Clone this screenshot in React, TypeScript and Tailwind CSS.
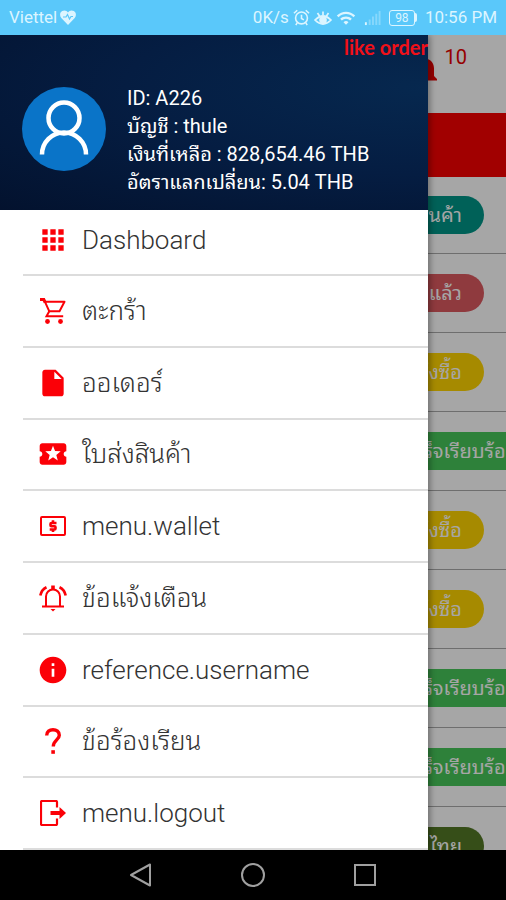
import type { ReactNode } from 'react'
import { MdApps, MdInfo, MdInsertDriveFile, MdLocalActivity, MdNotifications, MdWifi } from 'react-icons/md'

type MenuItem = { label: string; icon: ReactNode }
type Order = { status: string; tone: string }

function CartIcon() {
  return (
    <svg viewBox="0 0 26 26" className="size-[26px]" fill="none" stroke="currentColor">
      <path d="M0 1.500h3.800l1.400 3" strokeWidth="3" />
      <path d="M5 3.800h19.500l-5 9.500H9.300L5 3.800Z" strokeWidth="2" strokeLinejoin="round" />
      <path d="M9.300 13.300 6.500 18.300h16.700" strokeWidth="2" />
      <circle cx="7.500" cy="23.500" r="2.400" fill="currentColor" stroke="none" />
      <circle cx="20.500" cy="23.500" r="2.400" fill="currentColor" stroke="none" />
    </svg>
  )
}

function WalletIcon() {
  return (
    <svg viewBox="0 0 26 20" className="h-5 w-[26px]" fill="none" stroke="currentColor">
      <rect x="1" y="1" width="24" height="18" rx="1" strokeWidth="2" />
      <path d="M16.500 7h-5a1 1 0 0 0-1 1v1.200a1 1 0 0 0 1 1h3a1 1 0 0 1 1 1V12.500a1 1 0 0 1-1 1H9.700" strokeWidth="2.600" />
      <path d="M13 4.300v2M13 14v2" strokeWidth="2.600" />
    </svg>
  )
}

function BellIcon() {
  return (
    <svg viewBox="0 0 28 28" className="size-7" fill="none" stroke="currentColor" strokeWidth="2">
      <path d="M7 22v-9.500a7 7 0 0 1 14 0V22M3 22.500h22" />
      <path d="M14 1.500v4" strokeWidth="3.600" />
      <path d="M7.500 3.200Q2.600 5.500 1.300 11.500M20.500 3.200Q25.400 5.500 26.700 11.500" strokeWidth="2.600" />
      <path d="M11.500 25h5L14 27.500Z" fill="currentColor" stroke="none" />
    </svg>
  )
}

function QuestionIcon() {
  return (
    <svg viewBox="0 0 16 26" className="h-[26px] w-4" fill="none" stroke="currentColor" strokeWidth="3.400">
      <path d="M1.700 7.500C1.700 3.500 4.500 1.700 8 1.700s6.300 2.100 6.300 5.500c0 4.600-6 5-6 11.300" />
      <path d="M6.300 22.200h3.600v3.600H6.300z" fill="currentColor" stroke="none" />
    </svg>
  )
}

function LogoutIcon() {
  return (
    <svg viewBox="0 0 26 26" className="size-[26px]" fill="none" stroke="currentColor" strokeWidth="2.200">
      <path d="M17 7.500V2a1 1 0 0 0-1-1H2a1 1 0 0 0-1 1v22a1 1 0 0 0 1 1h14a1 1 0 0 0 1-1v-5.500" />
      <path d="M10.500 13h11" strokeWidth="4" />
      <path d="M19.500 7 26 13l-6.500 6Z" fill="currentColor" stroke="none" />
    </svg>
  )
}

const menu: MenuItem[] = [
  { label: 'Dashboard', icon: <MdApps className="size-8" /> },
  { label: 'ตะกร้า', icon: <CartIcon /> },
  { label: 'ออเดอร์', icon: <MdInsertDriveFile className="size-8" /> },
  { label: 'ใบส่งสินค้า', icon: <MdLocalActivity className="size-8" /> },
  { label: 'menu.wallet', icon: <WalletIcon /> },
  { label: 'ข้อแจ้งเตือน', icon: <BellIcon /> },
  { label: 'reference.username', icon: <MdInfo className="size-8" /> },
  { label: 'ข้อร้องเรียน', icon: <QuestionIcon /> },
  { label: 'menu.logout', icon: <LogoutIcon /> },
]

const pill = 'mr-[22px] rounded-full px-[22px]'
const wide = '-mr-5 px-2'

const orders: Order[] = [
  { status: 'สินค้า', tone: `${pill} bg-[#009688]` },
  { status: 'สั่งแล้ว', tone: `${pill} bg-[#dc5960]` },
  { status: 'สั่งซื้อ', tone: `${pill} bg-[#ffd500]` },
  { status: 'เสร็จเรียบร้อย', tone: `${wide} bg-[#48c75a]` },
  { status: 'สั่งซื้อ', tone: `${pill} bg-[#ffd500]` },
  { status: 'สั่งซื้อ', tone: `${pill} bg-[#ffd500]` },
  { status: 'เสร็จเรียบร้อย', tone: `${wide} bg-[#48c75a]` },
  { status: 'เสร็จเรียบร้อย', tone: `${wide} bg-[#48c75a]` },
  { status: 'ไทย', tone: `${pill} bg-[#537826]` },
]

function StatusBar() {
  return (
    <div className="flex h-[35px] shrink-0 items-center bg-[#5ac8fa] px-[9px] text-[17px] text-[#dcf5ff]">
      <span>Viettel</span>
      <svg viewBox="0 0 16 15" className="ml-[3px] h-[15px] w-4">
        <path
          d="M8 15 1.300 8C-.6 5.700-.2 2.300 2.200 1 4.300-.2 6.800.4 8 2.500 9.200.4 11.700-.2 13.800 1c2.400 1.300 2.800 4.700.9 7L8 15Z"
          fill="currentColor"
        />
        <path d="M3 7h3l1.500-2.500 2 4.500L11 6.500h2" fill="none" stroke="#5ac8fa" strokeWidth="1.200" />
      </svg>
      <span className="ml-auto">0K/s</span>
      <svg viewBox="0 0 18 18" className="ml-1 size-[17px]" fill="none" stroke="currentColor" strokeWidth="1.700">
        <circle cx="9" cy="9.500" r="6.300" />
        <path d="M9 6v4l2.500 1.500M1 4.500 4.500 1.300M17 4.500l-3.500-3.200M4.500 14.500 3 17M13.500 14.500 15 17" />
      </svg>
      <svg viewBox="0 0 18 18" className="ml-1 size-[18px]" fill="none" stroke="currentColor" strokeWidth="1.700">
        <path d="M1 11q8-8 16 0-8 8-16 0ZM9 2.500V6M3.500 4l2 3M14.500 4l-2 3" />
        <circle cx="9" cy="11" r="3" fill="currentColor" />
      </svg>
      <MdWifi className="ml-1 size-5" />
      <svg viewBox="0 0 18 18" className="ml-2 size-[17px]" fill="currentColor">
        <path d="M1 14h2v3H1z" />
        <path d="M5 11h2v6H5zM8.500 8h2v9h-2zM12 5h2v12h-2zM15.500 2h2v15h-2z" opacity=".35" />
      </svg>
      <span className="ml-2 flex h-4 w-[26px] items-center justify-center rounded-[3px] border border-current text-[12px]">
        98
      </span>
      <span className="h-[9px] w-[2px] rounded-r bg-current" />
      <span className="ml-2">10:56 PM</span>
    </div>
  )
}

function OrdersPage() {
  return (
    <main className="flex h-full flex-col bg-white">
      <header className="flex h-[78px] shrink-0 justify-end pt-[17px] pr-[39px] text-[#e60000]">
        <MdNotifications className="size-9" />
        <span className="ml-[2px] text-xl leading-[10px]">10</span>
      </header>
      <div className="h-16 shrink-0 bg-[#f80000]" />
      <ul>
        {orders.map((order, index) => (
          <li
            key={index}
            className="flex h-[79px] items-center justify-end border-b border-[#aaa] first:h-[77px]"
          >
            <span className={`flex h-[38px] items-center text-[20px] whitespace-nowrap text-white ${order.tone}`}>
              {order.status}
            </span>
          </li>
        ))}
      </ul>
    </main>
  )
}

function Profile() {
  return (
    <header className="relative flex h-[175px] shrink-0 items-start bg-[radial-gradient(ellipse_at_100%_30%,#06284f_0%,#051d42_50%,#03122e_100%)] pt-[49px] pl-[22px] text-white">
      <p className="absolute top-0 right-0 font-[Lato] text-xl leading-6 font-bold text-[#f01018]">like order</p>
      <svg viewBox="0 0 84 84" className="mt-[3px] size-[84px] shrink-0" fill="none" stroke="#fff" strokeWidth="4.500">
        <circle cx="42" cy="42" r="42" fill="#0a74c8" stroke="none" />
        <circle cx="42" cy="31" r="15.500" />
        <path d="M20 67.500a22 22 0 0 1 44 0" />
      </svg>
      <div className="ml-[21px] text-xl leading-7 whitespace-nowrap">
        <p>ID: A226</p>
        <p>บัญชี : thule</p>
        <p>เงินที่เหลือ : 828,654.46 THB</p>
        <p>อัตราแลกเปลี่ยน: 5.04 THB</p>
      </div>
    </header>
  )
}

function Drawer() {
  return (
    <aside className="absolute inset-y-0 left-0 flex w-[calc(100%-78px)] flex-col bg-white shadow-[2px_0_6px_rgba(0,0,0,0.35)]">
      <Profile />
      <nav className="flex flex-1 flex-col pl-[23px]">
        {menu.map((item) => (
          <a
            key={item.label}
            href="#"
            className="flex flex-1 items-center border-b-2 border-[#dcdcdc] text-[#333] first:h-[66px] first:flex-none first:pb-1"
          >
            <span className="flex w-[59px] justify-center text-[#fb0007]">{item.icon}</span>
            <span className="text-[26px] leading-8 font-light">{item.label}</span>
          </a>
        ))}
      </nav>
    </aside>
  )
}

function SystemNav() {
  const icon = 'size-6 fill-none stroke-[#a0a0a0] stroke-2'
  return (
    <div className="flex h-[50px] shrink-0 items-center justify-center gap-[88px] bg-black">
      <button aria-label="Back">
        <svg viewBox="0 0 24 24" className={icon}>
          <path d="M21 1.500v21L2 12Z" strokeLinejoin="round" />
        </svg>
      </button>
      <button aria-label="Home">
        <svg viewBox="0 0 24 24" className={icon}>
          <circle cx="12" cy="12" r="11" />
        </svg>
      </button>
      <button aria-label="Recent apps">
        <svg viewBox="0 0 24 24" className={icon}>
          <path d="M2 2h20v20H2z" />
        </svg>
      </button>
    </div>
  )
}

export default function App() {
  return (
    <div className="flex h-screen flex-col overflow-hidden font-[Roboto,'Noto_Sans_Thai_Looped','Noto_Looped_Thai','Droid_Sans_Thai',Waree,Loma,Garuda,'Noto_Sans',sans-serif]">
      <StatusBar />
      <div className="relative min-h-0 flex-1 overflow-hidden">
        <OrdersPage />
        <div className="absolute inset-0 bg-black/35" />
        <Drawer />
      </div>
      <SystemNav />
    </div>
  )
}
